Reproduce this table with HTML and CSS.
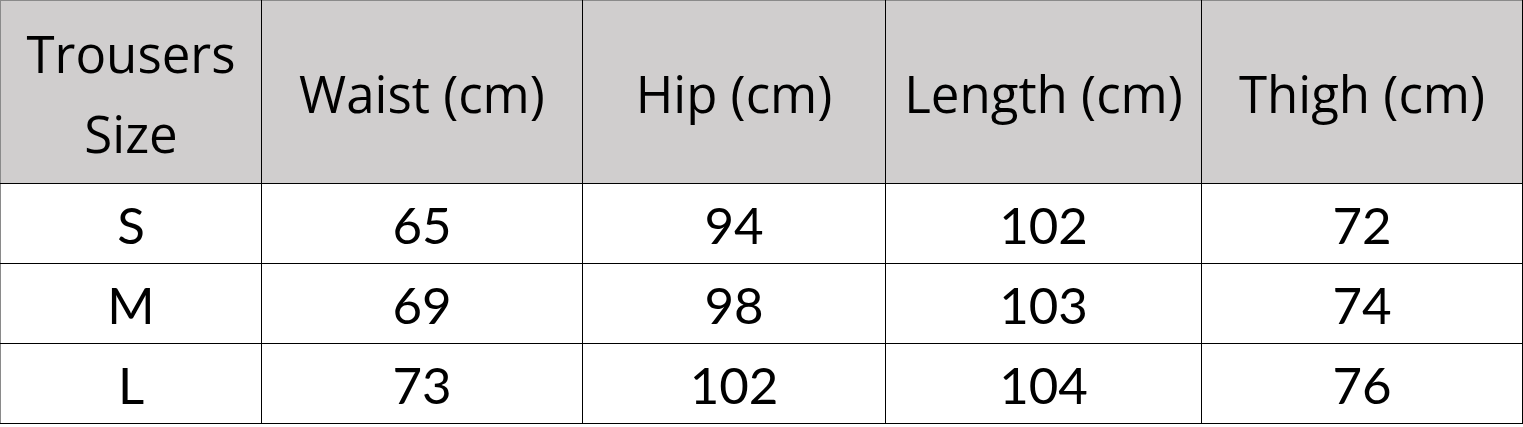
FILE: index.html
```html
<!DOCTYPE html>
<html>
<head>
<meta charset="utf-8">
<link rel="stylesheet" href="styles.css">
</head>
<body>
<table class="size-table">
  <colgroup>
    <col class="c1"><col class="c2"><col class="c3"><col class="c4"><col class="c5">
  </colgroup>
  <thead>
    <tr class="head">
      <th>Trousers<br>Size</th>
      <th>Waist (cm)</th>
      <th>Hip (cm)</th>
      <th>Length (cm)</th>
      <th>Thigh (cm)</th>
    </tr>
  </thead>
  <tbody>
    <tr><td>S</td><td>65</td><td>94</td><td>102</td><td>72</td></tr>
    <tr><td>M</td><td>69</td><td>98</td><td>103</td><td>74</td></tr>
    <tr><td>L</td><td>73</td><td>102</td><td>104</td><td>76</td></tr>
  </tbody>
</table>
</body>
</html>
```

FILE: styles.css
```css
html, body {
  margin: 0;
  padding: 0;
  background: #ffffff;
}

.size-table {
  border-collapse: collapse;
  table-layout: fixed;
  width: 1522px;
  font-family: "Lato", "Open Sans", sans-serif;
  font-size: 51px;
  color: #000;
  border-left: 1px solid #8a8a8a;
  border-top: 1px solid #8a8a8a;
}

.c1 { width: 261px; }
.c2 { width: 321px; }
.c3 { width: 303px; }
.c4 { width: 316px; }
.c5 { width: 321px; }

.size-table th,
.size-table td {
  border: 1px solid #000;
  text-align: center;
  vertical-align: middle;
  padding: 0;
  font-weight: normal;
}

.head th {
  background: #d0cece;
  height: 180px;
  padding-top: 2px;
  line-height: 80px;
  font-family: "Open Sans", "Lato", sans-serif;
  font-size: 51px;
}

.size-table td {
  height: 77px;
  padding-top: 2px;
  line-height: 77px;
}

.size-table tr:first-child th {
  border-top-color: #8a8a8a;
}
.size-table th:first-child,
.size-table td:first-child {
  border-left-color: #8a8a8a;
}
```
